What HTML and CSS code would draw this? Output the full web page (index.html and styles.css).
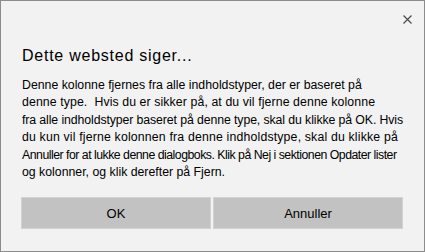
FILE: index.html
```html
<!DOCTYPE html>
<html lang="da">
<head>
<meta charset="utf-8">
<link rel="stylesheet" href="styles.css">
</head>
<body>
<div class="dialog">
  <div class="top">
    <button class="close" aria-label="Luk">
      <svg width="9" height="9" viewBox="0 0 9 9"><path d="M0.5 0.5 L8.5 8.5 M8.5 0.5 L0.5 8.5" stroke="#474747" stroke-width="1.1" fill="none"/></svg>
    </button>
  </div>
  <h1 class="title">Dette websted siger...</h1>
  <div class="msg">
    <span class="line">Denne kolonne fjernes fra alle indholdstyper, der er baseret på</span>
    <span class="line l2">denne type.&nbsp; Hvis du er sikker på, at du vil fjerne denne kolonne</span>
    <span class="line l3">fra alle indholdstyper baseret på denne type, skal du klikke på OK. Hvis</span>
    <span class="line l4">du kun vil fjerne kolonnen fra denne indholdstype, skal du klikke på</span>
    <span class="line l5">Annuller for at lukke denne dialogboks. Klik på Nej i sektionen Opdater lister</span>
    <span class="line">og kolonner, og klik derefter på Fjern.</span>
  </div>
  <div class="buttons">
    <button class="btn">OK</button>
    <button class="btn">Annuller</button>
  </div>
</div>
</body>
</html>
```
FILE: styles.css
```css
html, body {
  margin: 0;
  padding: 0;
  background: #f2f2f2;
}
.dialog {
  box-sizing: border-box;
  width: 425px;
  height: 252px;
  border: 1px solid #8c8c8c;
  background: #f2f2f2;
  font-family: "Liberation Sans", Arial, sans-serif;
  color: #000;
  display: flex;
  flex-direction: column;
}
.top {
  display: flex;
  justify-content: flex-end;
  padding: 14px 12px 0 0;
  height: 10px;
}
.close {
  border: 0;
  background: none;
  padding: 0;
  width: 9px;
  height: 9px;
  display: flex;
}
.title {
  margin: 21px 0 0 21px;
  font-size: 16px;
  font-weight: normal;
  line-height: 20px;
  letter-spacing: 0.75px;
}
.msg {
  margin: 11px 0 0 21px;
  font-size: 12.3px;
  line-height: 17.4px;
  display: flex;
  flex-direction: column;
}
.line {
  white-space: nowrap;
}
.l2 { letter-spacing: 0.1px; }
.l3 { letter-spacing: -0.1px; }
.l4 { letter-spacing: 0.17px; }
.l5 { letter-spacing: -0.5px; }
.buttons {
  display: flex;
  gap: 2px;
  margin: 16px 0 0 20px;
}
.btn {
  width: 190px;
  height: 32px;
  border: 1px solid #d2d2d2;
  background: #c2c2c2;
  font-family: "Liberation Sans", Arial, sans-serif;
  font-size: 13px;
  color: #000;
  padding: 0;
}
```
